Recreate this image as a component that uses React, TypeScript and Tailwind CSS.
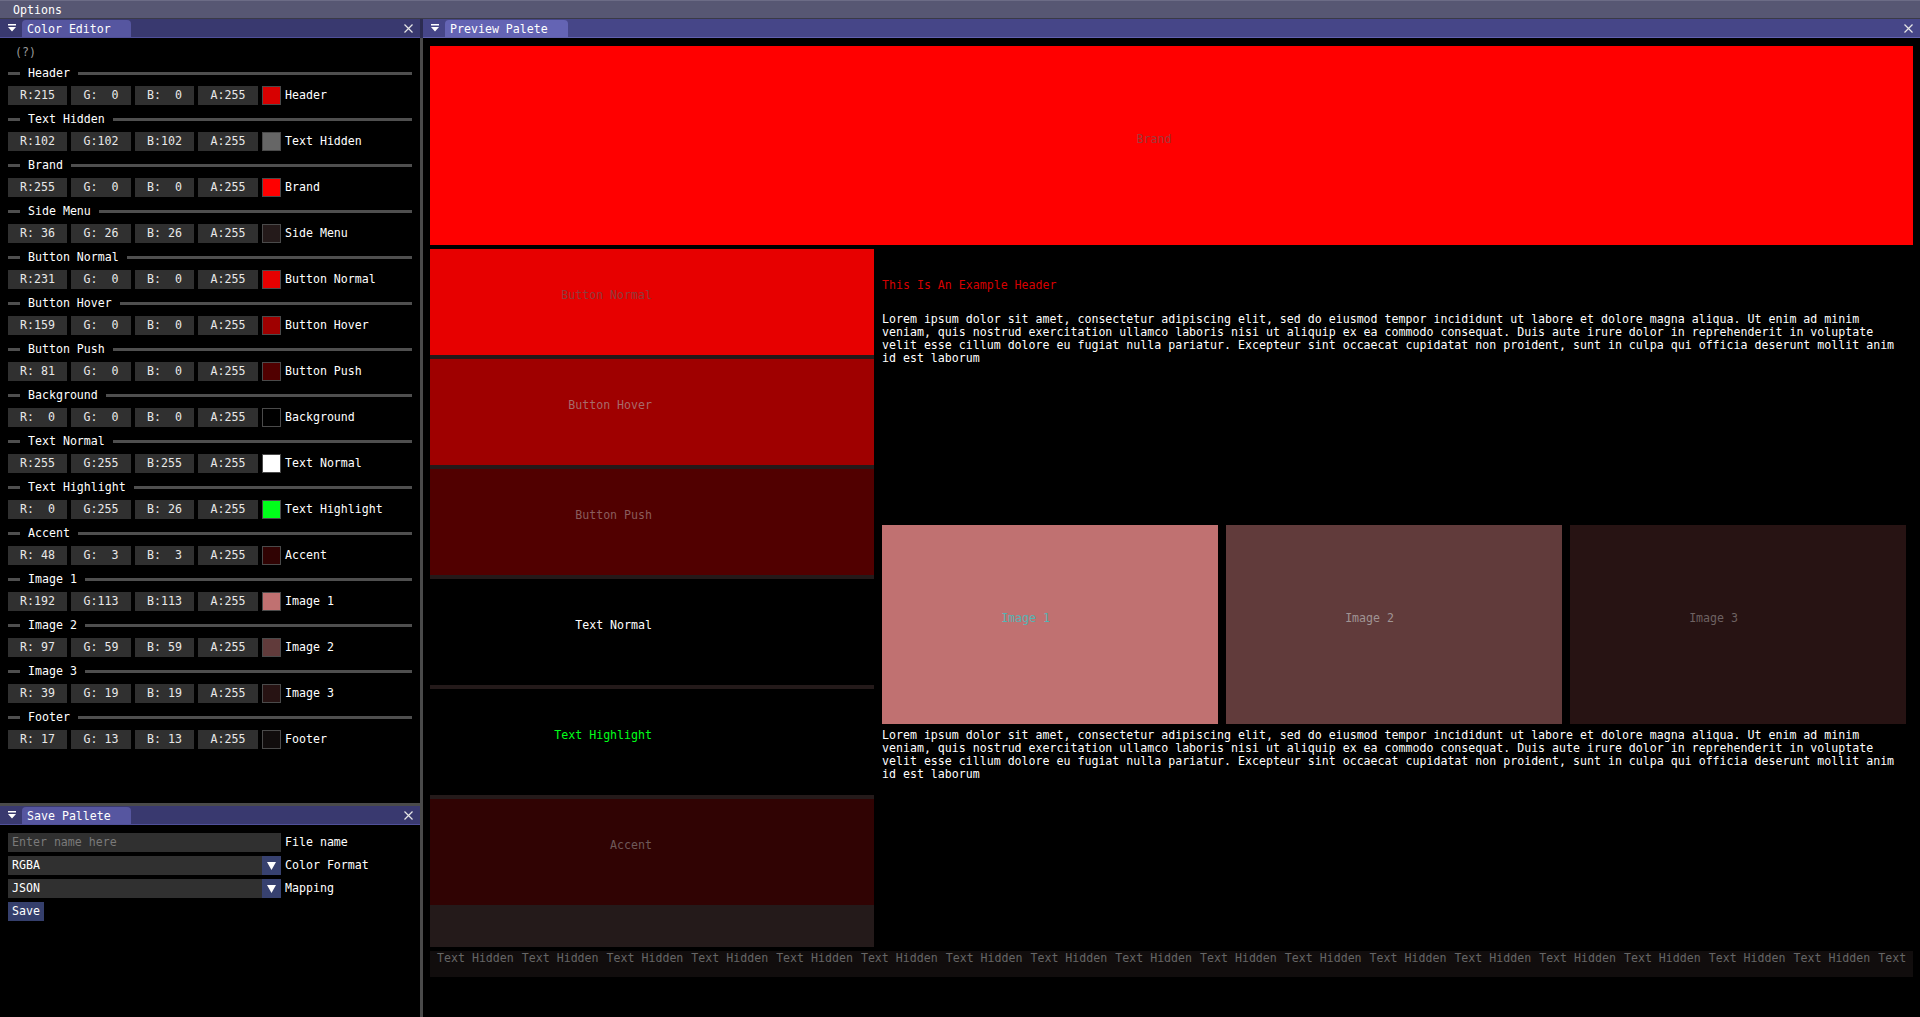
import React from "react";

type Swatch = { name: string; rgba: [number, number, number, number] };

const palette: Swatch[] = [
  { name: "Header", rgba: [215, 0, 0, 255] },
  { name: "Text Hidden", rgba: [102, 102, 102, 255] },
  { name: "Brand", rgba: [255, 0, 0, 255] },
  { name: "Side Menu", rgba: [36, 26, 26, 255] },
  { name: "Button Normal", rgba: [231, 0, 0, 255] },
  { name: "Button Hover", rgba: [159, 0, 0, 255] },
  { name: "Button Push", rgba: [81, 0, 0, 255] },
  { name: "Background", rgba: [0, 0, 0, 255] },
  { name: "Text Normal", rgba: [255, 255, 255, 255] },
  { name: "Text Highlight", rgba: [0, 255, 26, 255] },
  { name: "Accent", rgba: [48, 3, 3, 255] },
  { name: "Image 1", rgba: [192, 113, 113, 255] },
  { name: "Image 2", rgba: [97, 59, 59, 255] },
  { name: "Image 3", rgba: [39, 19, 19, 255] },
  { name: "Footer", rgba: [17, 13, 13, 255] },
];

const lorem = [
  "Lorem ipsum dolor sit amet, consectetur adipiscing elit, sed do eiusmod tempor incididunt ut labore et dolore magna aliqua. Ut enim ad minim",
  "veniam, quis nostrud exercitation ullamco laboris nisi ut aliquip ex ea commodo consequat. Duis aute irure dolor in reprehenderit in voluptate",
  "velit esse cillum dolore eu fugiat nulla pariatur. Excepteur sint occaecat cupidatat non proident, sunt in culpa qui officia deserunt mollit anim",
  "id est laborum",
];

const pad = (label: string, v: number) => `${label}:${String(v).padStart(3, " ")}`;

const CollapseIcon = () => (
  <svg width="8" height="8" viewBox="0 0 8 8">
    <path d="M0 0h8v1.5H0z M0 3h8L4 7.5z" fill="#ffffff" />
  </svg>
);

const CloseIcon = () => (
  <svg width="9" height="9" viewBox="0 0 9 9">
    <path d="M0.5 0.5L8.5 8.5M8.5 0.5L0.5 8.5" stroke="#e6e6e6" strokeWidth="1.2" />
  </svg>
);

const TitleBar = ({ title, active }: { title: string; active?: boolean }) => (
  <div
    className={`flex h-[19px] shrink-0 items-end border-b ${
      active ? "border-[#6262b0] bg-[#464688]" : "border-[#50509a] bg-[#39396f]"
    }`}
  >
    <div className="flex h-full w-[22px] shrink-0 items-center justify-center pl-[1px]">
      <CollapseIcon />
    </div>
    <div
      className={`h-[17px] shrink-0 rounded-t-[4px] pl-[5px] pr-[20px] leading-[18px] text-white ${
        active ? "bg-[#6464b4]" : "bg-[#5656a0]"
      }`}
    >
      {title}
    </div>
    <div className="flex-1" />
    <div className="flex h-full w-[24px] shrink-0 items-center justify-center">
      <CloseIcon />
    </div>
  </div>
);

const Field = ({ text, w }: { text: string; w: string }) => (
  <div className={`flex h-[19px] shrink-0 ${w} items-center justify-center bg-[#303030] whitespace-pre text-[#e8e8e8]`}>
    {text}
  </div>
);

const ColorRow = ({ s }: { s: Swatch }) => {
  const [r, g, b, a] = s.rgba;
  return (
    <div>
      <div className="mt-[7px] flex h-[14px] items-center gap-[8px]">
        <div className="h-[3px] w-[12px] shrink-0 bg-[#4f4f4f]" />
        <span className="shrink-0 text-white">{s.name}</span>
        <div className="h-[3px] flex-1 bg-[#4f4f4f]" />
      </div>
      <div className="mt-[6px] flex items-center gap-[4px]">
        <Field text={pad("R", r)} w="w-[59px]" />
        <Field text={pad("G", g)} w="w-[60px]" />
        <Field text={pad("B", b)} w="w-[59px]" />
        <Field text={pad("A", a)} w="w-[60px]" />
        <div
          className="h-[19px] w-[19px] shrink-0 border border-[#4a4a4a]"
          style={{ backgroundColor: `rgb(${r},${g},${b})` }}
        />
        <span className="whitespace-nowrap text-white">{s.name}</span>
      </div>
    </div>
  );
};

const ComboArrow = () => (
  <div className="flex h-[19px] w-[19px] shrink-0 items-center justify-center bg-[#37416f]">
    <svg width="9" height="8" viewBox="0 0 9 8">
      <path d="M0 0h9L4.5 8z" fill="#ffffff" />
    </svg>
  </div>
);

// text sits with its bottom-right corner on the centre of the block
const Block = ({ label, cls, text }: { label: string; cls: string; text: string }) => (
  <div className={`flex shrink-0 ${cls}`}>
    <div className={`flex h-1/2 w-1/2 items-end justify-end whitespace-nowrap ${text}`}>{label}</div>
  </div>
);

const Paragraph = () => (
  <div className="text-white">
    {lorem.map((l) => (
      <div key={l} className="whitespace-nowrap">
        {l}
      </div>
    ))}
  </div>
);

export default function App() {
  return (
    <div className="flex h-[1017px] w-[1920px] flex-col overflow-hidden bg-black font-['DejaVu_Sans_Mono',monospace] text-[11.6px] leading-[13px]">
      {/* menu bar */}
      <div className="flex h-[19px] shrink-0 items-center border-t border-b border-t-[#6c6c86] border-b-[#3a3a48] bg-[#575773] pl-[13px] pt-[1px] text-white">
        Options
      </div>

      <div className="flex min-h-0 flex-1">
        {/* left dock */}
        <div className="flex w-[420px] shrink-0 flex-col">
          <div className="flex h-[784px] shrink-0 flex-col">
            <TitleBar title="Color Editor" />
            <div className="px-[8px] pt-[8px]">
              <div className="pl-[7px] text-[#9a9a9a]">(?)</div>
              {palette.map((s) => (
                <ColorRow key={s.name} s={s} />
              ))}
            </div>
          </div>
          <div className="h-[3px] shrink-0 bg-[#4a4a4a]" />
          <div className="flex flex-1 flex-col">
            <TitleBar title="Save Pallete" />
            <div className="flex flex-col gap-[4px] px-[8px] pt-[8px]">
              <div className="flex items-center gap-[4px]">
                <div className="flex h-[19px] w-[273px] shrink-0 items-center bg-[#303030] pl-[4px] text-[#7a7a7a]">
                  Enter name here
                </div>
                <span className="whitespace-nowrap text-white">File name</span>
              </div>
              <div className="flex items-center gap-[4px]">
                <div className="flex h-[19px] w-[273px] shrink-0 items-center bg-[#303030]">
                  <span className="flex-1 pl-[4px] text-white">RGBA</span>
                  <ComboArrow />
                </div>
                <span className="whitespace-nowrap text-white">Color Format</span>
              </div>
              <div className="flex items-center gap-[4px]">
                <div className="flex h-[19px] w-[273px] shrink-0 items-center bg-[#303030]">
                  <span className="flex-1 pl-[4px] text-white">JSON</span>
                  <ComboArrow />
                </div>
                <span className="whitespace-nowrap text-white">Mapping</span>
              </div>
              <div className="flex h-[19px] w-[36px] items-center justify-center bg-[#353f6c] text-white">
                Save
              </div>
            </div>
          </div>
        </div>

        {/* dock divider */}
        <div className="flex w-[3px] shrink-0 flex-col">
          <div className="h-[19px] bg-[#2c2c52]" />
          <div className="flex-1 bg-[#4a4a4a]" />
        </div>

        {/* preview */}
        <div className="flex min-w-0 flex-1 flex-col">
          <TitleBar title="Preview Palete" active />
          <div className="flex flex-col px-[7px] pt-[8px]">
            <Block label="Brand" cls="h-[199px] bg-[#ff0000]" text="text-[#9e3a3a]" />
            <div className="mt-[4px] flex h-[698px] shrink-0">
              <div className="flex w-[444px] shrink-0 flex-col gap-[4px] bg-[#241a1a]">
                <Block label="Button Normal" cls="h-[106px] bg-[#e70000]" text="text-[#8e3c3c]" />
                <Block label="Button Hover" cls="h-[106px] bg-[#9f0000]" text="text-[#a86a6a]" />
                <Block label="Button Push" cls="h-[106px] bg-[#510000]" text="text-[#8a5c5c]" />
                <Block label="Text Normal" cls="h-[106px] bg-black" text="text-white" />
                <Block label="Text Highlight" cls="h-[106px] bg-black" text="text-[#00ff1a]" />
                <Block label="Accent" cls="h-[106px] bg-[#300303]" text="text-[#6e5a5a]" />
              </div>
              <div className="ml-[8px] flex min-w-0 flex-1 flex-col pt-[30px]">
                <div className="text-[#d70000]">This Is An Example Header</div>
                <div className="mt-[21px]">
                  <Paragraph />
                </div>
                <div className="mt-[160px] flex h-[199px] shrink-0 gap-[8px]">
                  <Block label="Image 1" cls="w-[336px] bg-[#c07171]" text="text-[#56b4b4]" />
                  <Block label="Image 2" cls="w-[336px] bg-[#613b3b]" text="text-[#a09494]" />
                  <Block label="Image 3" cls="w-[336px] bg-[#271313]" text="text-[#6e6262]" />
                </div>
                <div className="mt-[5px]">
                  <Paragraph />
                </div>
              </div>
            </div>
            <div className="mt-[4px] flex h-[26px] shrink-0 gap-[8px] overflow-hidden bg-[#110d0d] pl-[7px] pt-[1px] text-[#666666]">
              {Array.from({ length: 18 }, (_, i) => (
                <span key={i} className="shrink-0 whitespace-nowrap">
                  Text Hidden
                </span>
              ))}
            </div>
          </div>
        </div>
      </div>
    </div>
  );
}
